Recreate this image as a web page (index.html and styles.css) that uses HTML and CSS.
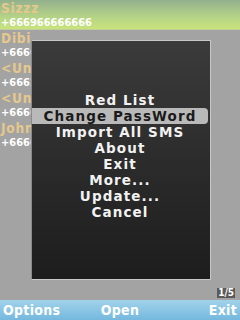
FILE: index.html
```html
<html>
  <head>
    <title>Contacts</title>
    <link rel="stylesheet" href="styles.css">
  </head>
  <body>
    <div class="screen">
      <ul class="list">
        <li class="item selected">
          <div class="name">Sizzz</div>
          <div class="number">+666966666666</div>
        </li>
        <li class="item">
          <div class="name">Dibi</div>
          <div class="number">+666666666666</div>
        </li>
        <li class="item">
          <div class="name">&lt;Unknown&gt;</div>
          <div class="number">+666266666666</div>
        </li>
        <li class="item">
          <div class="name">&lt;Unknown&gt;</div>
          <div class="number">+666666666666</div>
        </li>
        <li class="item">
          <div class="name">John</div>
          <div class="number">+666666666666</div>
        </li>
      </ul>

      <div class="popup">
        <ul class="menu">
          <li>Red List</li>
          <li class="active">Change PassWord</li>
          <li>Import All SMS</li>
          <li>About</li>
          <li>Exit</li>
          <li>More...</li>
          <li>Update...</li>
          <li>Cancel</li>
        </ul>
      </div>

      <div class="pager">1/5</div>

      <div class="softkeys">
        <span class="left">Options</span>
        <span class="middle">Open</span>
        <span class="right">Exit</span>
      </div>
    </div>
  </body>
</html>
```

FILE: styles.css
```css
body {
  margin: 0;
  background: #a3a3a3;
  font-family: "DejaVu Sans Condensed", "DejaVu Sans", sans-serif;
}

.screen {
  position: relative;
  width: 240px;
  height: 320px;
  overflow: hidden;
  display: flex;
  flex-direction: column;
}

.list {
  list-style: none;
  margin: 0;
  padding: 0;
  flex: 1;
}

.item {
  height: 30px;
  padding-left: 1px;
}

.item.selected {
  background: linear-gradient(#93b08e, #b6d486 60%, #c9e47c);
  border-bottom: 1px solid #c4cc98;
  height: 29px;
}

.name {
  height: 16px;
  line-height: 16px;
  font-size: 13.5px;
  font-weight: bold;
  letter-spacing: 0.8px;
  color: #e6c88c;
}

.number {
  height: 14px;
  line-height: 14px;
  font-size: 11px;
  font-weight: bold;
  color: #fff;
}

.popup {
  position: absolute;
  left: 31px;
  top: 40px;
  width: 178px;
  height: 238px;
  border: 1px solid #c8c8c8;
  border-left-color: #8a8a8a;
  background: linear-gradient(#3b3b3b, #1d1d1d);
}

.menu {
  list-style: none;
  margin: 0;
  padding: 51px 0 0;
}

.menu li {
  height: 16px;
  line-height: 16px;
  margin-right: 2px;
  text-align: center;
  font-family: "DejaVu Sans", sans-serif;
  font-size: 13.5px;
  font-weight: bold;
  letter-spacing: 1.1px;
  color: #f2f2f2;
}

.menu li.active {
  background: #b9b9b9;
  color: #1a1a1a;
  border-radius: 0 4px 4px 0;
}

.pager {
  position: absolute;
  right: 5px;
  bottom: 22px;
  padding: 0 1px;
  height: 10px;
  line-height: 10px;
  font-size: 10px;
  font-weight: bold;
  color: #fff;
  background: #5a5a5a;
}

.softkeys {
  height: 20px;
  display: grid;
  grid-template-columns: 1fr 1fr 1fr;
  align-items: center;
  padding: 0 3px;
  background: linear-gradient(#a2d2ea, #74b8de);
  color: #fff;
  font-size: 14px;
  font-weight: bold;
  letter-spacing: 0.3px;
}

.softkeys .middle {
  text-align: center;
}

.softkeys .right {
  text-align: right;
}
```
